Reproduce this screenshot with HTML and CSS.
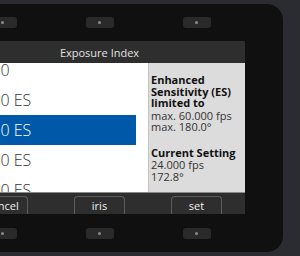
FILE: index.html
```
<!DOCTYPE html>
<html lang="en">
<head>
  <meta charset="UTF-8" />
  <title>Exposure Index</title>
  <link rel="stylesheet" href="styles.css">
</head>
<body>
  <div class="device">
    <div class="slots">
      <span class="slot"></span>
      <span class="slot"></span>
      <span class="slot"></span>
    </div>
    <div class="screen">
      <div class="title">Exposure Index</div>
      <div class="content">
        <div class="list">
          <ul>
            <li>2000</li>
            <li>2560 ES</li>
            <li class="selected">3200 ES</li>
            <li>4000 ES</li>
            <li>5120 ES</li>
          </ul>
        </div>
        <div class="info">
          <p class="head">Enhanced Sensitivity (ES) limited to</p>
          <p class="block">max. 60.000 fps<br>max. 180.0°</p>
          <p class="head">Current Setting</p>
          <p>24.000 fps<br>172.8°</p>
        </div>
      </div>
      <div class="actions">
        <button>cancel</button>
        <button>iris</button>
        <button>set</button>
      </div>
    </div>
    <div class="slots">
      <span class="slot"></span>
      <span class="slot"></span>
      <span class="slot"></span>
    </div>
  </div>
</body>
</html>
```

FILE: styles.css
```
:root {
  --outer: #2b2b32;
  --body: #101010;
  --bar: #2e2e2e;
  --panel: #dcdcdc;
  --accent: #0059a8;
  --sans: 'Open Sans', 'DejaVu Sans', sans-serif;
}
* { box-sizing: border-box; }
body {
  margin: 0;
  width: 300px;
  height: 256px;
  background: var(--outer);
  font-family: var(--sans);
  overflow: hidden;
}
.device {
  width: 367px;
  height: 248px;
  margin: 4px 0 0 -84px;
  padding: 0 38px;
  background: var(--body);
  border-radius: 16px;
  display: flex;
  flex-direction: column;
}
.slots {
  height: 37px;
  display: grid;
  grid-template-columns: repeat(3, 1fr);
  align-items: center;
  justify-items: center;
}
.slot {
  width: 28px;
  height: 11px;
  border-radius: 3px;
  background: #2a2a2a;
  display: flex;
  align-items: center;
  justify-content: center;
}
.slot::after {
  content: '';
  width: 3px;
  height: 3px;
  border-radius: 50%;
  background: #8a8a8a;
}
.screen {
  width: 291px;
  height: 174px;
  display: flex;
  flex-direction: column;
}
.title {
  height: 22px;
  background: var(--bar);
  color: #e2e2e2;
  font-size: 11px;
  display: flex;
  align-items: center;
  justify-content: center;
}
.content {
  height: 130px;
  display: flex;
  border-bottom: 1px solid #8a8a8a;
}
.list {
  width: 194px;
  background: #fff;
  padding-right: 12px;
  overflow: hidden;
}
.list ul {
  list-style: none;
  margin: -8px 0 0;
  padding: 0;
}
.list li {
  height: 30px;
  line-height: 30px;
  padding-left: 19px;
  font-size: 16px;
  font-weight: 300;
  color: #333;
  font-variant-numeric: tabular-nums;
  white-space: nowrap;
}
.list li.selected {
  background: var(--accent);
  color: #fff;
}
.info {
  width: 97px;
  background: var(--panel);
  border-left: 1px solid #c4c4c4;
  padding: 11px 2px 0 2px;
  font-size: 11px;
  line-height: 11.5px;
  color: #333;
}
.info p { margin: 0; }
.info .head {
  font-weight: bold;
  color: #111;
  margin-bottom: 1px;
}
.info .block { margin-bottom: 14px; }
.actions {
  height: 21px;
  background: var(--bar);
  display: grid;
  grid-template-columns: repeat(3, 1fr);
  justify-items: center;
  align-items: end;
}
.actions button {
  width: 51px;
  height: 18px;
  padding: 0;
  background: var(--bar);
  border: 1px solid #5c5c5c;
  border-bottom: none;
  border-radius: 4px 4px 0 0;
  color: #eee;
  font-family: var(--sans);
  font-size: 11px;
}
```
